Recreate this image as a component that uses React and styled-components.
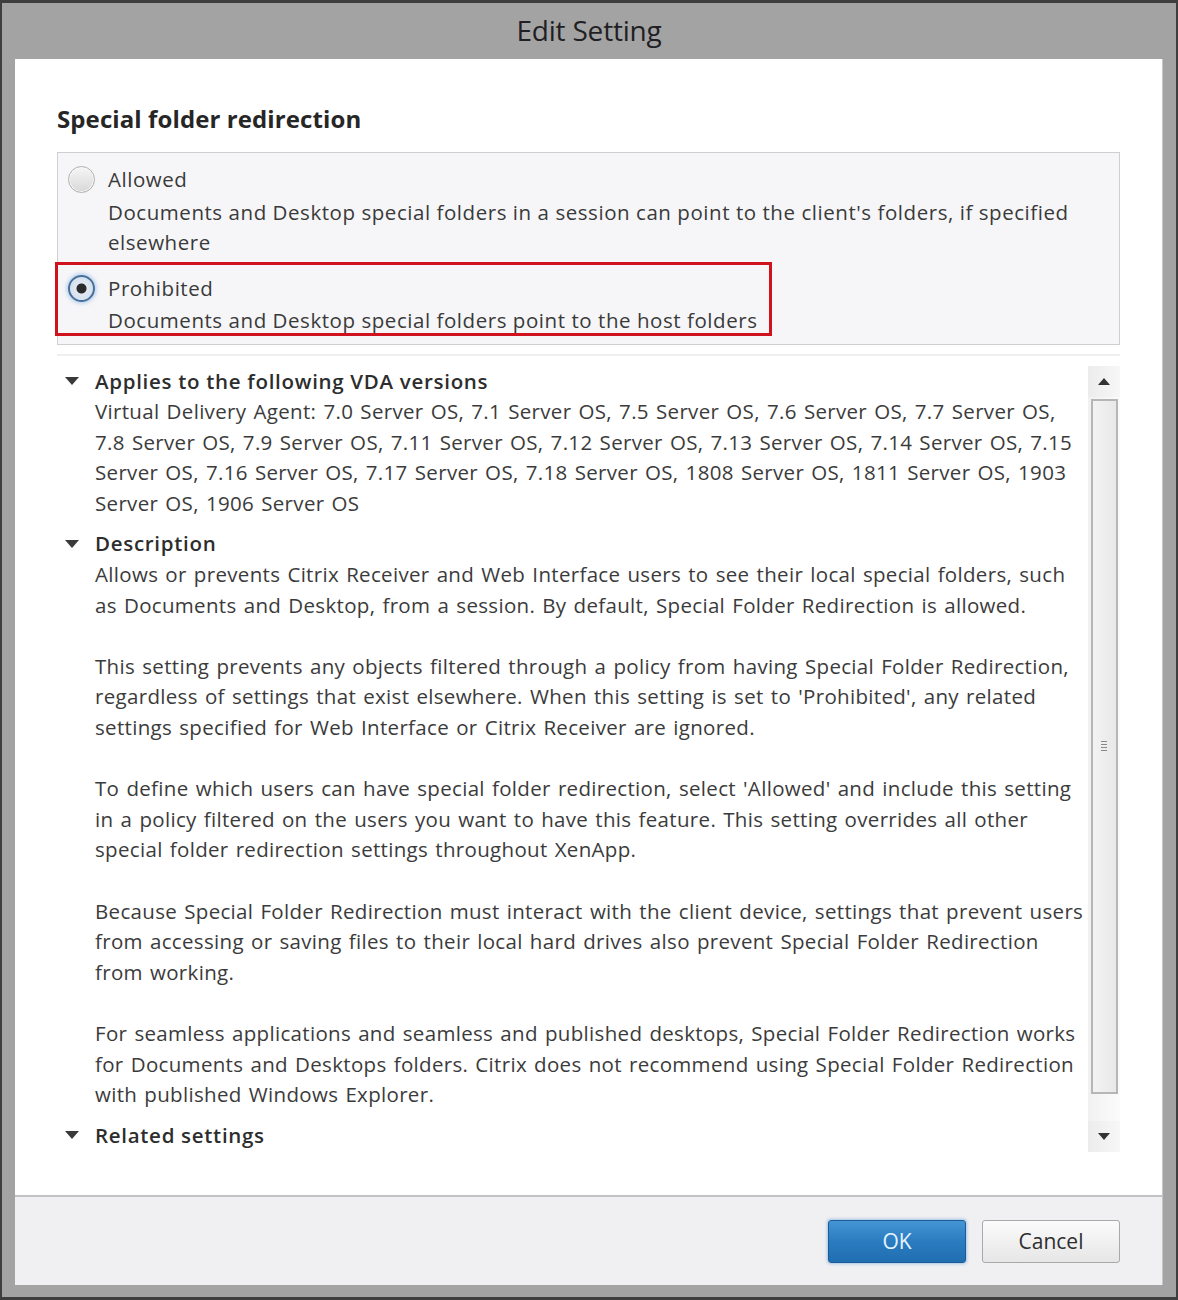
import React from "react";
import styled, { createGlobalStyle } from "styled-components";

const GlobalStyle = createGlobalStyle`
  html, body {
    margin: 0;
    padding: 0;
    background: #a2a2a2;
  }
  * {
    box-sizing: border-box;
  }
`;

const VERSIONS =
  "Virtual Delivery Agent: 7.0 Server OS, 7.1 Server OS, 7.5 Server OS, 7.6 Server OS, 7.7 Server OS, 7.8 Server OS, 7.9 Server OS, 7.11 Server OS, 7.12 Server OS, 7.13 Server OS, 7.14 Server OS, 7.15 Server OS, 7.16 Server OS, 7.17 Server OS, 7.18 Server OS, 1808 Server OS, 1811 Server OS, 1903 Server OS, 1906 Server OS";

const DESCRIPTION = [
  "Allows or prevents Citrix Receiver and Web Interface users to see their local special folders, such as Documents and Desktop, from a session. By default, Special Folder Redirection is allowed.",
  "This setting prevents any objects filtered through a policy from having Special Folder Redirection, regardless of settings that exist elsewhere. When this setting is set to 'Prohibited', any related settings specified for Web Interface or Citrix Receiver are ignored.",
  "To define which users can have special folder redirection, select 'Allowed' and include this setting in a policy filtered on the users you want to have this feature. This setting overrides all other special folder redirection settings throughout XenApp.",
  "Because Special Folder Redirection must interact with the client device, settings that prevent users from accessing or saving files to their local hard drives also prevent Special Folder Redirection from working.",
  "For seamless applications and seamless and published desktops, Special Folder Redirection works for Documents and Desktops folders. Citrix does not recommend using Special Folder Redirection with published Windows Explorer.",
];

function Caret() {
  return (
    <CaretIcon width="14" height="8" viewBox="0 0 14 8">
      <path d="M0 0 H14 L7 8 Z" fill="#3a3a3a" />
    </CaretIcon>
  );
}

function ScrollArrow({ up }) {
  return (
    <svg width="12" height="7" viewBox="0 0 12 7">
      <path d={up ? "M0 7 H12 L6 0 Z" : "M0 0 H12 L6 7 Z"} fill="#333" />
    </svg>
  );
}

function Section({ title, children }) {
  return (
    <SectionBlock>
      <SectionHead>
        <Caret />
        <SectionTitle>{title}</SectionTitle>
      </SectionHead>
      {children && <SectionBody>{children}</SectionBody>}
    </SectionBlock>
  );
}

function Option({ label, detail, checked, highlighted }) {
  return (
    <OptionRow $highlighted={highlighted}>
      <Radio $checked={checked} />
      <OptionText>
        <OptionLabel>{label}</OptionLabel>
        <OptionDetail>{detail}</OptionDetail>
      </OptionText>
    </OptionRow>
  );
}

export default function App() {
  return (
    <>
      <GlobalStyle />
      <Frame>
        <TitleBar>Edit Setting</TitleBar>
        <Window>
          <Body>
            <Heading>Special folder redirection</Heading>
            <OptionsBox>
              <Option
                label="Allowed"
                detail="Documents and Desktop special folders in a session can point to the client's folders, if specified elsewhere"
              />
              <Option
                label="Prohibited"
                detail="Documents and Desktop special folders point to the host folders"
                checked
                highlighted
              />
            </OptionsBox>
            <Divider />
            <InfoPane>
              <InfoContent>
                <Section title="Applies to the following VDA versions">
                  <p>{VERSIONS}</p>
                </Section>
                <Section title="Description">
                  {DESCRIPTION.map((text) => (
                    <p key={text.slice(0, 20)}>{text}</p>
                  ))}
                </Section>
                <Section title="Related settings" />
              </InfoContent>
              <ScrollBar>
                <ScrollButton>
                  <ScrollArrow up />
                </ScrollButton>
                <Thumb>
                  <Grip>
                    <span />
                    <span />
                    <span />
                    <span />
                  </Grip>
                </Thumb>
                <ScrollButton>
                  <ScrollArrow />
                </ScrollButton>
              </ScrollBar>
            </InfoPane>
          </Body>
          <Footer>
            <PrimaryButton>OK</PrimaryButton>
            <SecondaryButton>Cancel</SecondaryButton>
          </Footer>
        </Window>
      </Frame>
    </>
  );
}

const textFont = `"Open Sans", "Noto Sans", sans-serif`;

const Frame = styled.div`
  width: 1178px;
  height: 1300px;
  display: flex;
  flex-direction: column;
  background: #a3a3a3;
  border: 2px solid #3e3e3e;
  border-top-width: 3px;
  border-bottom-width: 3px;
  font-family: ${textFont};
  color: #3b3b3b;
`;

const TitleBar = styled.div`
  height: 56px;
  flex-shrink: 0;
  display: flex;
  align-items: center;
  justify-content: center;
  padding-bottom: 3px;
  font-size: 28px;
  color: #1f1f24;
  letter-spacing: -0.2px;
`;

const Window = styled.div`
  flex: 1;
  margin: 0 13px 12px 13px;
  display: flex;
  flex-direction: column;
  background: #fff;
  border-right: 1px solid #c6c6c6;
`;

const Body = styled.div`
  flex: 1;
  padding: 40px 42px 0 42px;
  display: flex;
  flex-direction: column;
`;

const Heading = styled.h1`
  margin: 0 0 13px 0;
  font-size: 24px;
  font-weight: 700;
  color: #262626;
  line-height: 40px;
  letter-spacing: 0.1px;
`;

const OptionsBox = styled.div`
  background: #f6f6f8;
  border: 1px solid #cfcfd2;
  padding: 0 0 8px 0;
  display: flex;
  flex-direction: column;
  gap: 4px;
`;

const OptionRow = styled.div`
  display: flex;
  align-items: flex-start;
  gap: 13px;
  padding: 8px 12px 0 10px;
  margin-left: -3px;
  margin-right: 30px;
  align-self: ${({ $highlighted }) => ($highlighted ? "flex-start" : "stretch")};
  border: 3px solid
    ${({ $highlighted }) => ($highlighted ? "#d0121f" : "transparent")};
`;

const Radio = styled.span`
  flex-shrink: 0;
  width: 27px;
  height: 27px;
  margin-top: 2px;
  border-radius: 50%;
  border: ${({ $checked }) =>
    $checked ? "2px solid #46709c" : "1.5px solid #b0b0b0"};
  background: ${({ $checked }) =>
    $checked
      ? "radial-gradient(circle, #2b2b2b 0 4.5px, #dfe8f2 5.5px, #cfdceb 100%)"
      : "linear-gradient(#f6f6f6, #d8d8d8)"};
  box-shadow: ${({ $checked }) =>
    $checked
      ? "0 0 4px 1px rgba(110, 160, 220, 0.55)"
      : "inset 0 0 0 1px #f8f8f8"};
`;

const OptionText = styled.div`
  display: flex;
  flex-direction: column;
  gap: 2px;
  font-size: 20.5px;
  letter-spacing: 0.55px;
  line-height: 30.5px;
  color: #3a3a3a;
`;

const OptionLabel = styled.div``;

const OptionDetail = styled.div`
  margin-bottom: -3px;
`;

const Divider = styled.div`
  height: 2px;
  margin: 9px 0 10px 0;
  background: #efeff1;
`;

const InfoPane = styled.div`
  height: 786px;
  display: flex;
`;

const InfoContent = styled.div`
  flex: 1;
  display: flex;
  flex-direction: column;
  padding-left: 8px;
  font-size: 20.5px;
  letter-spacing: 0.32px;
  word-spacing: 1.5px;
  line-height: 30.6px;
  color: #3b3b3b;
  overflow: hidden;
`;

const SectionBlock = styled.div`
  display: flex;
  flex-direction: column;
  margin-bottom: 10px;
`;

const SectionHead = styled.div`
  display: flex;
  align-items: center;
  gap: 16px;
`;

const CaretIcon = styled.svg`
  flex-shrink: 0;
`;

const SectionTitle = styled.div`
  font-weight: 600;
  color: #2d2d2d;
  letter-spacing: 0.7px;
  word-spacing: 0;
`;

const SectionBody = styled.div`
  padding-left: 30px;

  p {
    margin: 0 0 30.6px 0;
  }

  p:last-child {
    margin-bottom: 0;
  }
`;

const ScrollBar = styled.div`
  width: 32px;
  flex-shrink: 0;
  display: flex;
  flex-direction: column;
  align-items: center;
  background: linear-gradient(90deg, #f1f1f1, #fbfbfb);
`;

const ScrollButton = styled.div`
  height: 31px;
  width: 100%;
  display: flex;
  align-items: center;
  justify-content: center;
  background: linear-gradient(90deg, #ececec, #f7f7f7);
`;

const Thumb = styled.div`
  flex: 1;
  width: 27px;
  margin: 2px 0 27px 0;
  border: 2px solid #b6b6b6;
  background: linear-gradient(90deg, #f3f3f3, #e8e8e8);
  display: flex;
  align-items: center;
  justify-content: center;
`;

const Grip = styled.div`
  display: flex;
  flex-direction: column;
  gap: 2px;

  span {
    display: block;
    width: 6px;
    height: 1px;
    background: #8a8a8a;
  }
`;

const Footer = styled.div`
  height: 90px;
  flex-shrink: 0;
  display: flex;
  align-items: center;
  justify-content: flex-end;
  gap: 16px;
  padding: 0 42px 0 0;
  background: #f0f0f2;
  border-top: 2px solid #c2c2c4;
`;

const BaseButton = styled.button`
  height: 43px;
  width: 138px;
  font-family: ${textFont};
  font-size: 21px;
  padding: 0;
  border-radius: 3px;
  cursor: pointer;
`;

const PrimaryButton = styled(BaseButton)`
  color: #e4f3ff;
  border: 1px solid #1b5c98;
  background: linear-gradient(#4595d4, #2a7cc0 50%, #1f6eb0);
  box-shadow: 0 0 3px 1px rgba(70, 140, 210, 0.45);
`;

const SecondaryButton = styled(BaseButton)`
  color: #2e2e2e;
  border: 1px solid #a9a9a9;
  background: linear-gradient(#fbfbfb, #e6e6e6);
`;
